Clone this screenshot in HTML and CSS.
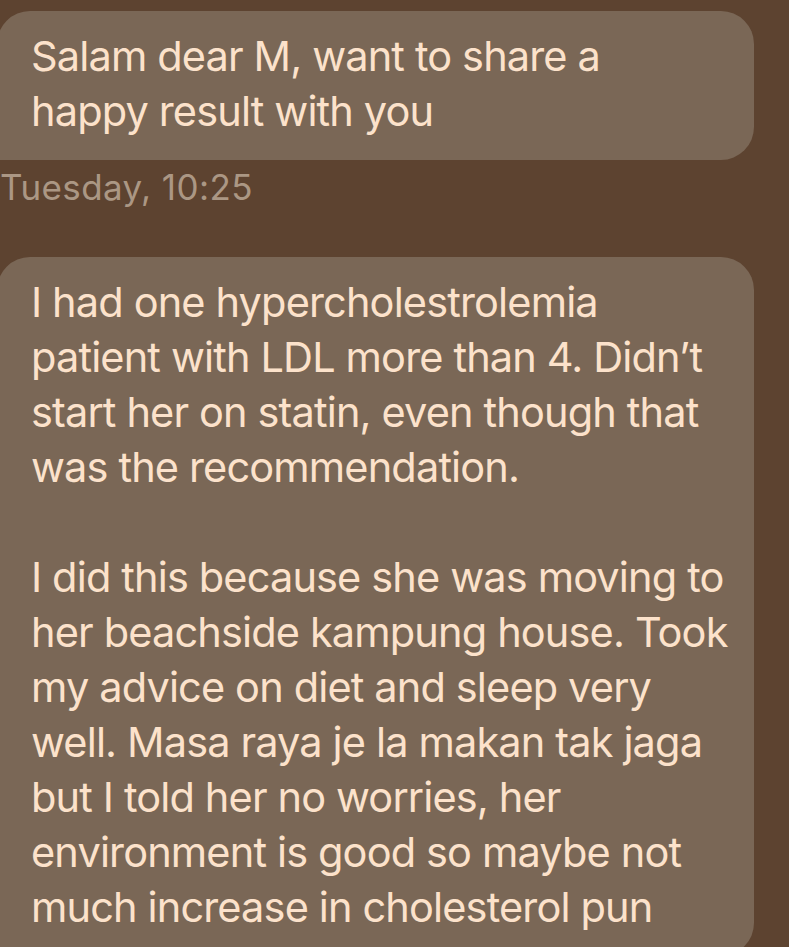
FILE: index.html
```html
<!DOCTYPE html>
<html lang="en">
<head>
<meta charset="utf-8">
<title>Messages</title>
<link rel="stylesheet" href="styles.css">
</head>
<body>
<main class="thread">
  <div class="msg">
    <div class="bubble bubble-first">Salam dear M, want to share a<br>happy result with you</div>
    <div class="time">Tuesday, 10:25</div>
  </div>
  <div class="msg">
    <div class="bubble bubble-second">I had one hypercholestrolemia<br>patient with LDL more than 4. Didn’t<br>start her on statin, even though that<br>was the recommendation.<br><br>I did this because she was moving to<br>her beachside kampung house. Took<br>my advice on diet and sleep very<br>well. Masa raya je la makan tak jaga<br>but I told her no worries, her<br>environment is good so maybe not<br>much increase in cholesterol pun</div>
  </div>
</main>
</body>
</html>
```

FILE: styles.css
```css
html, body {
  margin: 0;
  padding: 0;
  background: #5d4330;
  height: 100%;
  overflow: hidden;
}
.thread {
  display: flex;
  flex-direction: column;
  padding: 11px 35px 0 0;
  margin-left: -3px;
  font-family: Inter, "Liberation Sans", sans-serif;
}
.bubble {
  background: #7a6756;
  color: #fce2cb;
  font-size: 41.5px;
  line-height: 55px;
  letter-spacing: -0.85px;
  padding: 18px 20px 21px 34px;
  border-radius: 33px 33px 33px 4px;
  white-space: nowrap;
}
.time {
  color: #ab9784;
  font-size: 35px;
  line-height: 40px;
  letter-spacing: 0.4px;
  margin: 7px 0 0 3px;
}
.bubble-second {
  margin-top: 50px;
}
```
